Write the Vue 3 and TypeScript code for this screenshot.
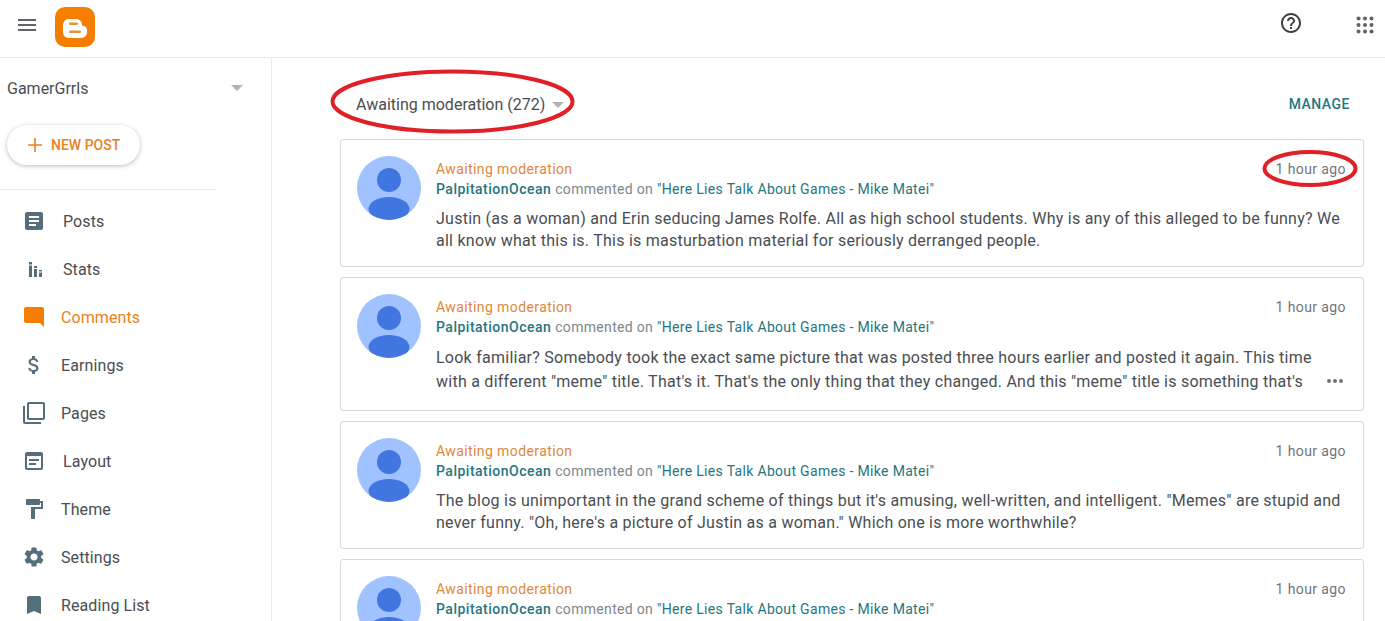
<script setup lang="ts">
interface NavItem {
  label: string
  d: string
  active?: boolean
  wide?: boolean
}

interface CommentItem {
  text: string
  clipped?: boolean
}

const navItems: NavItem[] = [
  { label: 'Posts', wide: true, d: 'M19 3H5c-1.1 0-2 .9-2 2v14c0 1.1.9 2 2 2h14c1.1 0 2-.9 2-2V5c0-1.1-.9-2-2-2zm-5 14H7v-2h7v2zm3-4H7v-2h10v2zm0-4H7V7h10v2z' },
  { label: 'Stats', wide: true, d: 'M7 5h3v2.500H7zM7 8.500h3V20H7zM12 9h3v2h-3zM12 12h3v8h-3zM17 13h3v1.500h-3zM17 15.500h3V20h-3z' },
  { label: 'Comments', active: true, d: 'M21.99 4c0-1.1-.89-2-1.99-2H4c-1.1 0-2 .9-2 2v12c0 1.1.9 2 2 2h14l4 4-.01-18z' },
  { label: 'Earnings', d: 'M11.8 10.9c-2.27-.59-3-1.2-3-2.15 0-1.09 1.01-1.85 2.7-1.85 1.78 0 2.44.85 2.5 2.1h2.21c-.07-1.72-1.12-3.3-3.21-3.81V3h-3v2.16c-1.94.42-3.5 1.68-3.5 3.61 0 2.31 1.91 3.46 4.7 4.13 2.5.6 3 1.48 3 2.41 0 .69-.49 1.79-2.7 1.79-2.06 0-2.87-.92-2.98-2.1h-2.2c.12 2.19 1.76 3.42 3.68 3.83V21h3v-2.15c1.95-.37 3.5-1.5 3.5-3.55 0-2.84-2.43-3.81-4.7-4.4z' },
  { label: 'Pages', d: 'M3 5H1v16c0 1.1.9 2 2 2h16v-2H3V5zm18-4H7c-1.1 0-2 .9-2 2v14c0 1.1.9 2 2 2h14c1.1 0 2-.9 2-2V3c0-1.1-.9-2-2-2zm0 16H7V3h14v14z' },
  { label: 'Layout', wide: true, d: 'M19 3H5c-1.1 0-2 .9-2 2v14c0 1.1.9 2 2 2h14c1.100 0 2-.9 2-2V5c0-1.100-.9-2-2-2zm0 16H5V7h14v12zM7 10h10v2H7zM7 14h7v2H7z' },
  { label: 'Theme', d: 'M18 4V3c0-.55-.45-1-1-1H5c-.55 0-1 .45-1 1v4c0 .55.45 1 1 1h12c.55 0 1-.45 1-1V6h1v4H9v11c0 .55.45 1 1 1h2c.55 0 1-.45 1-1v-9h8V4h-3z' },
  { label: 'Settings', d: 'M19.14 12.94c.04-.3.06-.61.06-.94 0-.32-.02-.64-.07-.94l2.03-1.58c.18-.14.23-.41.12-.61l-1.92-3.32c-.12-.22-.37-.29-.59-.22l-2.39.96c-.5-.38-1.03-.7-1.62-.94l-.36-2.54c-.04-.24-.24-.41-.48-.41h-3.84c-.24 0-.43.17-.47.41l-.36 2.54c-.59.24-1.13.57-1.62.94l-2.39-.96c-.22-.08-.47 0-.59.22L2.74 8.87c-.12.21-.08.47.12.61l2.03 1.58c-.05.3-.09.63-.09.94s.02.64.07.94l-2.03 1.58c-.18.14-.23.41-.12.61l1.92 3.32c.12.22.37.29.59.22l2.39-.96c.5.38 1.03.7 1.62.94l.36 2.54c.05.24.24.41.48.41h3.84c.24 0 .44-.17.47-.41l.36-2.54c.59-.24 1.13-.56 1.62-.94l2.39.96c.22.08.47 0 .59-.22l1.92-3.32c.12-.22.07-.47-.12-.61l-2.01-1.58zM12 15.6c-1.98 0-3.6-1.62-3.6-3.6s1.62-3.6 3.6-3.6 3.6 1.62 3.6 3.6-1.62 3.6-3.6 3.6z' },
  { label: 'Reading List', d: 'M17 3H7c-1.1 0-2 .9-2 2v16l7-3 7 3V5c0-1.1-.9-2-2-2z' },
]

const comments: CommentItem[] = [
  { text: 'Justin (as a woman) and Erin seducing James Rolfe. All as high school students. Why is any of this alleged to be funny? We all know what this is. This is masturbation material for seriously derranged people.' },
  { text: 'Look familiar? Somebody took the exact same picture that was posted three hours earlier and posted it again. This time with a different "meme" title. That\'s it. That\'s the only thing that they changed. And this "meme" title is something that\'s', clipped: true },
  { text: 'The blog is unimportant in the grand scheme of things but it\'s amusing, well-written, and intelligent. "Memes" are stupid and never funny. "Oh, here\'s a picture of Justin as a woman." Which one is more worthwhile?' },
  { text: '' },
]

const dots = [0, 1, 2].flatMap(y => [0, 1, 2].map(x => ({ x: 2.5 + x * 6.500, y: 2.5 + y * 6.500 })))
</script>

<template>
  <div class="page">
    <header class="topbar">
      <button class="menu" aria-label="Menu">
        <svg width="24" height="24" viewBox="0 0 24 24"><path d="M3 18h18v-2H3v2zm0-5h18v-2H3v2zm0-7v2h18V6H3z" fill="#5f6368" /></svg>
      </button>
      <svg class="logo" width="40" height="40" viewBox="0 0 40 40">
        <rect width="40" height="40" rx="10" fill="#f57d00" />
        <path d="M14 12h7c3.500 0 6 2.500 6 5.500v1c2.500.4 5 1.500 5 4v3c0 3-3 5.500-6 5.500H14c-3.300 0-6-2.500-6-5.500V18c0-3.300 2.700-6 6-6z" fill="#fff" />
        <rect x="14" y="15.500" width="9" height="2.500" rx="1.250" fill="#e2933f" />
        <rect x="14" y="23.500" width="12" height="2.500" rx="1.250" fill="#e2933f" />
      </svg>
      <div class="top-actions">
        <svg class="help" width="24" height="24" viewBox="0 0 24 24"><path d="M11 18h2v-2h-2v2zm1-16C6.480 2 2 6.480 2 12s4.480 10 10 10 10-4.480 10-10S17.520 2 12 2zm0 18c-4.410 0-8-3.590-8-8s3.590-8 8-8 8 3.590 8 8-3.590 8-8 8zm0-14c-2.210 0-4 1.790-4 4h2c0-1.100.9-2 2-2s2 .9 2 2c0 2-3 1.750-3 5h2c0-2.250 3-2.500 3-5 0-2.210-1.790-4-4-4z" fill="#3c4043" /></svg>
        <svg class="apps" width="18" height="18" viewBox="0 0 18 18"><circle v-for="(dot, i) in dots" :key="i" :cx="dot.x" :cy="dot.y" r="2" fill="#5f6368" /></svg>
      </div>
    </header>

    <div class="body">
      <aside class="sidebar">
        <div class="blog-picker">
          <span>GamerGrrls</span>
          <i class="caret" />
        </div>
        <button class="new-post">
          <svg width="16" height="16" viewBox="0 0 16 16"><path d="M7.200 1h1.600v6.200H15v1.600H8.800V15H7.200V8.800H1V7.200h6.200z" fill="#e8821e" /></svg>
          NEW POST
        </button>
        <div class="divider" />
        <nav class="nav">
          <a v-for="item in navItems" :key="item.label" class="nav-item" :class="{ active: item.active, wide: item.wide }">
            <svg width="24" height="24" viewBox="0 0 24 24"><path :d="item.d" /></svg>
            <span>{{ item.label }}</span>
          </a>
        </nav>
      </aside>

      <main class="content">
        <div class="list-head">
          <div class="filter">
            <span>Awaiting moderation (272)</span>
            <i class="caret" />
          </div>
          <a class="manage">MANAGE</a>
        </div>

        <article v-for="(comment, i) in comments" :key="i" class="card" :class="{ clipped: comment.clipped }">
          <svg class="avatar" width="64" height="64" viewBox="0 0 64 64">
            <defs><clipPath :id="`av${i}`"><circle cx="32" cy="32" r="32" /></clipPath></defs>
            <circle cx="32" cy="32" r="32" fill="#a0c3ff" />
            <g :clip-path="`url(#av${i})`" fill="#4175df">
              <circle cx="32" cy="24" r="12" />
              <ellipse cx="32" cy="53" rx="20.500" ry="12" />
            </g>
          </svg>
          <div class="card-main">
            <div class="card-top">
              <span class="status">Awaiting moderation</span>
              <span class="time">1 hour ago</span>
            </div>
            <div class="byline">
              <b>PalpitationOcean</b> commented on <a>"Here Lies Talk About Games - Mike Matei"</a>
            </div>
            <p v-if="comment.text" class="text">{{ comment.text }}</p>
          </div>
          <div v-if="comment.clipped" class="more"><i /><i /><i /></div>
        </article>
      </main>
    </div>

    <!-- hand-drawn red marks on top of the screenshot -->
    <svg class="marks" width="1385" height="621" viewBox="0 0 1385 621">
      <ellipse cx="452.500" cy="101.500" rx="120" ry="30" />
      <ellipse cx="1310" cy="168.500" rx="45.500" ry="16.500" />
    </svg>
  </div>
</template>

<style scoped>
.page {
  position: relative;
  height: 621px;
  overflow: hidden;
  background: #fff;
  color: #3c4043;
  font-family: Roboto, "Liberation Sans", sans-serif;
}

.topbar {
  display: flex;
  align-items: center;
  height: 51px;
  padding: 0 0 6px 15px;
  border-bottom: 1px solid #e8eaed;
  box-sizing: content-box;
}

.menu {
  display: flex;
  margin-top: -1px;
  padding: 0;
  border: 0;
  background: none;
}

.logo {
  margin-left: 16px;
  margin-top: 3px;
}

.top-actions {
  display: flex;
  align-items: center;
  gap: 53px;
  margin-left: auto;
  padding-right: 11px;
}

.help {
  margin-top: -5px;
}

.apps {
  margin-top: -1px;
}

.body {
  display: flex;
}

.sidebar {
  flex: none;
  width: 271px;
  height: 563px;
  border-right: 1px solid #e8eaed;
}

.blog-picker {
  display: flex;
  align-items: center;
  justify-content: space-between;
  width: 243px;
  height: 60px;
  padding-left: 7px;
  box-sizing: border-box;
  font-size: 16px;
  color: #4a4e52;
}

.caret {
  display: block;
  width: 0;
  height: 0;
  border-left: 6.500px solid transparent;
  border-right: 6.500px solid transparent;
  border-top: 6.500px solid #b4b4b4;
}

.new-post {
  display: flex;
  align-items: center;
  gap: 8px;
  width: 133px;
  height: 40px;
  margin: 7px 0 0 7px;
  padding: 0 0 1px 20px;
  border: 0;
  border-radius: 20px;
  background: #fff;
  box-shadow: 0 1px 4px rgba(60, 64, 67, .35);
  color: #e8821e;
  font: 500 14px Roboto, "Liberation Sans", sans-serif;
}

.divider {
  width: 216px;
  margin-top: 24px;
  border-top: 1px solid #e8eaed;
}

.nav {
  padding-top: 7px;
}

.nav-item {
  display: flex;
  align-items: center;
  gap: 15px;
  height: 48px;
  padding-left: 22px;
  font-size: 16px;
  letter-spacing: .1px;
  color: #4a4e52;
}

.nav-item.wide {
  gap: 17px;
}

.nav-item svg {
  fill: #546e7a;
}

.nav-item.active {
  color: #e8821e;
}

.nav-item.active svg {
  fill: #f57d00;
}

.content {
  flex: 1;
  min-width: 0;
  padding: 0 21px 0 68px;
}

.list-head {
  display: flex;
  align-items: center;
  justify-content: space-between;
  height: 81px;
  padding: 10px 14px 0 16px;
  box-sizing: border-box;
}

.filter {
  display: flex;
  align-items: center;
  gap: 7px;
  margin-top: 2px;
  font-size: 16px;
  color: #4a4e52;
}

.filter .caret {
  margin-top: 1px;
}

.manage {
  font-size: 14px;
  font-weight: 500;
  letter-spacing: .5px;
  color: #26767f;
}

.card {
  position: relative;
  display: flex;
  gap: 15px;
  margin-bottom: 10px;
  padding: 16px 17px 14px 16px;
  border: 1px solid #d6d8da;
  border-radius: 3px;
  box-sizing: border-box;
  min-height: 128px;
}

.card.clipped {
  min-height: 134px;
}

.avatar {
  flex: none;
}

.card-main {
  flex: 1;
  min-width: 0;
}

.card-top {
  display: flex;
  justify-content: space-between;
  height: 20px;
  margin-top: 3px;
  line-height: 20px;
  font-size: 14px;
  letter-spacing: .4px;
}

.status {
  color: #e0873a;
}

.time {
  color: #70757a;
}

.byline {
  height: 20px;
  line-height: 20px;
  font-size: 14px;
  letter-spacing: .32px;
  color: #80868b;
}

.byline b {
  font-weight: 500;
  letter-spacing: .5px;
  color: #26767f;
}

.byline a {
  color: #26767f;
}

.text {
  margin: 9px 0 0;
  font-size: 16px;
  line-height: 22px;
  letter-spacing: .25px;
  color: #4a4e52;
}

.clipped .text {
  padding-right: 30px;
  line-height: 24px;
}

.more {
  position: absolute;
  right: 20px;
  bottom: 27px;
  display: flex;
  gap: 2px;
}

.more i {
  width: 4px;
  height: 4px;
  border-radius: 50%;
  background: #70757a;
}

.marks {
  position: absolute;
  top: 0;
  left: 0;
  pointer-events: none;
}

.marks ellipse {
  fill: none;
  stroke: #e01f26;
  stroke-width: 4;
}
</style>

<style>
html, body {
  margin: 0;
  overflow: hidden;
}
</style>
